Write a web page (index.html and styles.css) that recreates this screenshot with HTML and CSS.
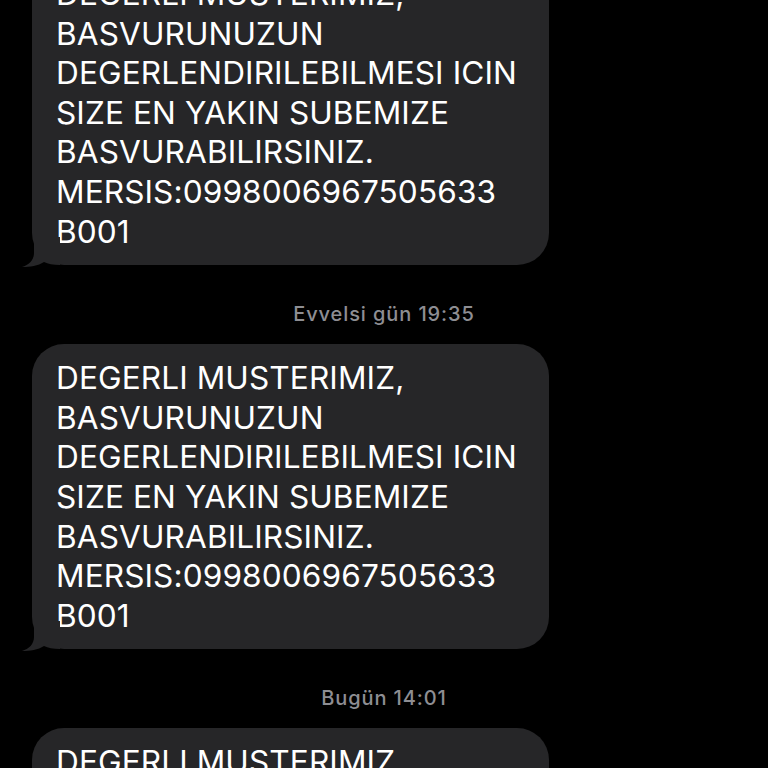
FILE: index.html
```html
<!DOCTYPE html>
<html>
<head>
<meta charset="utf-8">
<link rel="stylesheet" href="styles.css">
</head>
<body>
<div class="thread">
  <div class="bubble first">
    <p class="msg">DEGERLI MUSTERIMIZ,<br>BASVURUNUZUN<br>DEGERLENDIRILEBILMESI ICIN<br>SIZE EN YAKIN SUBEMIZE<br>BASVURABILIRSINIZ.<br>MERSIS:0998006967505633<br>B001</p>
    <svg class="tail" width="40" height="30" viewBox="0 0 40 30"><path d="M14 0 L14 16 C14 23 9 28 2 30 C10 30 18 29 24 25 C28 27 33 28 40 28 L40 0 Z" fill="#262628"/></svg>
  </div>
  <div class="stamp">Evvelsi gün 19:35</div>
  <div class="bubble">
    <p class="msg">DEGERLI MUSTERIMIZ,<br>BASVURUNUZUN<br>DEGERLENDIRILEBILMESI ICIN<br>SIZE EN YAKIN SUBEMIZE<br>BASVURABILIRSINIZ.<br>MERSIS:0998006967505633<br>B001</p>
    <svg class="tail" width="40" height="30" viewBox="0 0 40 30"><path d="M14 0 L14 16 C14 23 9 28 2 30 C10 30 18 29 24 25 C28 27 33 28 40 28 L40 0 Z" fill="#262628"/></svg>
  </div>
  <div class="stamp">Bugün 14:01</div>
  <div class="bubble">
    <p class="msg">DEGERLI MUSTERIMIZ,<br>BASVURUNUZUN<br>DEGERLENDIRILEBILMESI ICIN<br>SIZE EN YAKIN SUBEMIZE<br>BASVURABILIRSINIZ.<br>MERSIS:0998006967505633<br>B001</p>
  </div>
</div>
</body>
</html>
```
FILE: styles.css
```css
html, body {
  margin: 0;
  padding: 0;
  background: #000;
  overflow: hidden;
}
.thread {
  display: flex;
  flex-direction: column;
  align-items: flex-start;
  margin-top: -40px;
  width: 768px;
}
.bubble {
  position: relative;
  margin-left: 32px;
  width: 517px;
  box-sizing: border-box;
  background: #262628;
  border-radius: 32px;
  padding: 14px 10px 14px 24px;
}
.msg {
  margin: 0;
  color: #fff;
  font-family: Inter, "Liberation Sans", sans-serif;
  font-size: 31.6px;
  line-height: 39.6px;
  letter-spacing: 0.1px;
  white-space: nowrap;
}
.tail {
  position: absolute;
  left: -12px;
  bottom: -2px;
}
.stamp {
  align-self: center;
  color: #8e8e93;
  font-family: Inter, "Liberation Sans", sans-serif;
  font-weight: 500;
  font-size: 20px;
  line-height: 24px;
  letter-spacing: 0.9px;
  margin: 37px 0 18px;
}
```
